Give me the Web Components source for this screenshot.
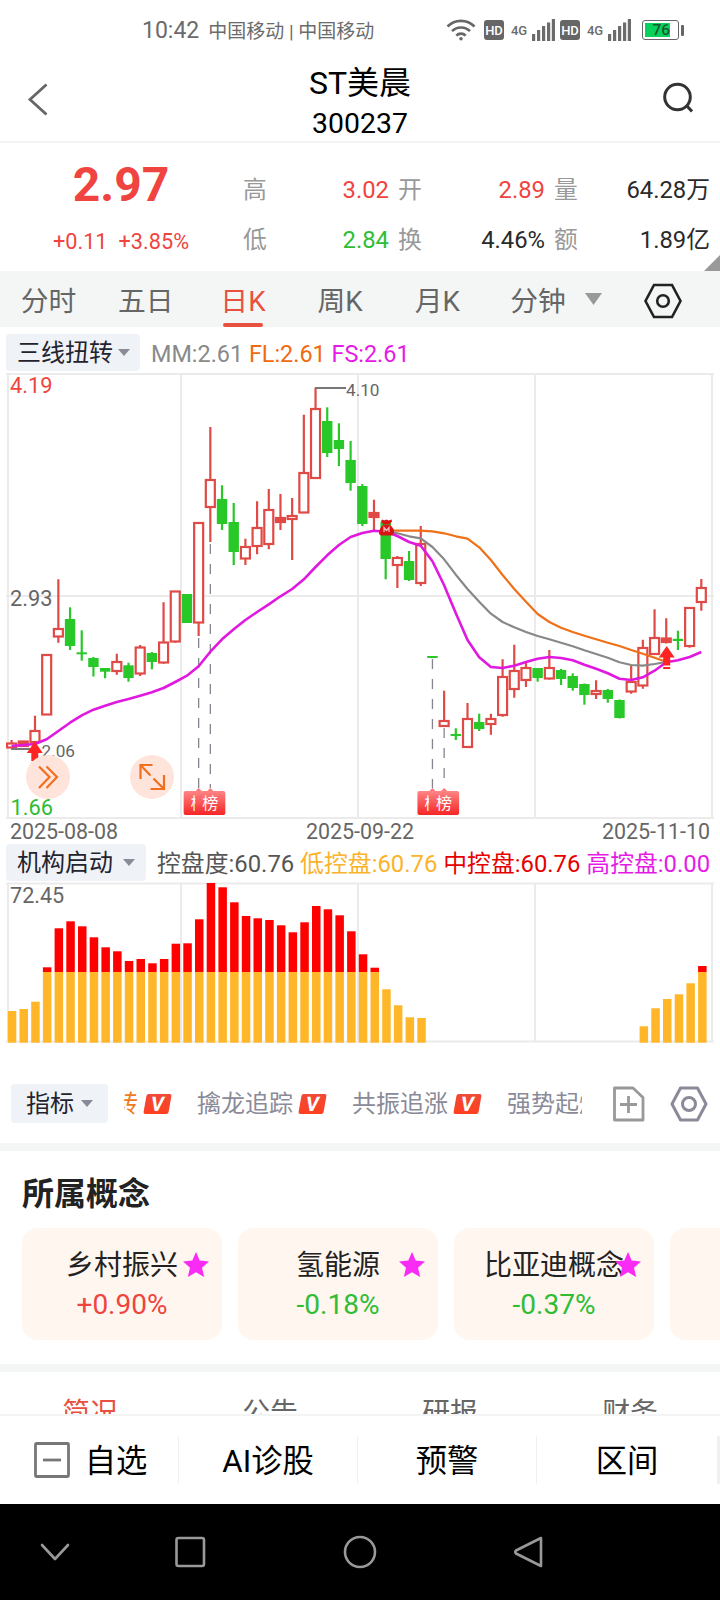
<!DOCTYPE html>
<html lang="zh-CN">
<head>
  <meta charset="UTF-8">
  <meta name="viewport" content="width=device-width,initial-scale=1,minimum-scale=1">
  <title>ST美晨 300237</title>
  <style type="text/css">
    body {
      --up: #ef4440;
      --down: #2fbd36;
      --panel: #f4f6f6;
      margin: 0;
      width: 720px;
      height: 1600px;
      overflow: hidden;
      background: #fff;
      color: #2a2a2a;
      font-family: Roboto, "Noto Sans CJK SC", sans-serif;
      display: flex;
      flex-direction: column;
    }

    .up { color: var(--up) }
    .down { color: var(--down) }
  </style>
</head>
<body>
  <status-bar>10:42<span slot="carrier">中国移动 | 中国移动</span></status-bar>
  <stock-header code="300237">ST美晨</stock-header>

  <quote-panel>
    <span slot="price">2.97</span>
    <span slot="change">+0.11</span>
    <span slot="change">+3.85%</span>
    <stat-cell label="高" class="up">3.02</stat-cell>
    <stat-cell label="开" class="up">2.89</stat-cell>
    <stat-cell label="量">64.28万</stat-cell>
    <stat-cell label="低" class="down">2.84</stat-cell>
    <stat-cell label="换">4.46%</stat-cell>
    <stat-cell label="额">1.89亿</stat-cell>
  </quote-panel>

  <period-bar>
    <period-tab>分时</period-tab>
    <period-tab>五日</period-tab>
    <period-tab active>日K</period-tab>
    <period-tab>周K</period-tab>
    <period-tab>月K</period-tab>
    <period-tab wide>分钟</period-tab>
  </period-bar>

  <indicator-row style="height: 45px; --top: 7px; --size: 23.4px; --gap: 11px">
    <drop-chip slot="chip" style="width: 134px; --pad: 11px; --gap: 5px">三线扭转</drop-chip>
    <span style="color: #8a8a8a">MM:2.61</span>
    <span style="color: #f06a10">FL:2.61</span>
    <span style="color: #e61ae6">FS:2.61</span>
  </indicator-row>
  <kline-chart>
    <span slot="date">2025-08-08</span>
    <span slot="date">2025-09-22</span>
    <span slot="date">2025-11-10</span>
  </kline-chart>

  <indicator-row style="height: 38px; --top: 0px; --size: 23.85px; --gap: 11px">
    <drop-chip slot="chip" style="width: 140px; --pad: 11px; --gap: 10px">机构启动</drop-chip>
    <span style="color: #555">控盘度:60.76</span>
    <span style="color: #fbb32b">低控盘:60.76</span>
    <span style="color: #e60000">中控盘:60.76</span>
    <span style="color: #e61ae6">高控盘:0.00</span>
  </indicator-row>
  <control-chart></control-chart>

  <tool-strip>
    <drop-chip slot="chip" style="width: 97px; height: 39px; --pad: 15px; --gap: 7px">指标</drop-chip>
    <vip-item style="color: #f07a20">三线扭转</vip-item>
    <vip-item>擒龙追踪</vip-item>
    <vip-item>共振追涨</vip-item>
    <vip-item>强势起爆</vip-item>
  </tool-strip>

  <concept-section heading="所属概念">
    <concept-card>乡村振兴<span slot="rate" class="up">+0.90%</span></concept-card>
    <concept-card>氢能源<span slot="rate" class="down">-0.18%</span></concept-card>
    <concept-card>比亚迪概念<span slot="rate" class="down">-0.37%</span></concept-card>
    <concept-card blank></concept-card>
  </concept-section>

  <info-tabs>
    <span style="color: #e8503f">简况</span>
    <span>公告</span>
    <span>研报</span>
    <span>财务</span>
  </info-tabs>

  <action-bar>
    <action-item icon>自选</action-item>
    <action-item>AI诊股</action-item>
    <action-item>预警</action-item>
    <action-item>区间</action-item>
  </action-bar>
  <system-nav></system-nav>

  <script type="text/javascript">

    // registers an element whose shadow root is a static template
    function define(name, html) {
      const template = document.createElement("template")
      template.innerHTML = html

      customElements.define(name, class extends HTMLElement {
        constructor() {
          super()
          const root = this.attachShadow({ mode: "open" })
          root.appendChild(template.content.cloneNode(true))
          root.querySelectorAll("[data-attr]").forEach(node => {
            node.textContent = this.getAttribute(node.dataset.attr)
          })
        }
      })
    }

    const signal = `
      <svg width="23" height="22" viewBox="0 0 23 22" fill="#6b6b6b">
        <path d="M0 15h3.200v7H0zM5 11h3.200v11H5zM10 7h3.200v15h-3.200zM15 3.500h3.200v18.500h-3.200zM19.800 0h3.200v22h-3.200z"/>
      </svg>`

    define("status-bar", `
      <style>
        :host {
          display: flex;
          align-items: center;
          height: 61px;
          padding: 0 36px 0 142px;
          box-sizing: border-box;
          color: #6b6b6b;
          font-size: 23px;
        }
        .carrier { font-size: 19px; margin-left: 9px; flex: 1; padding-bottom: 2px }
        .icons { display: flex; align-items: center; padding-bottom: 1px }
        .hd {
          width: 20px; height: 20px; line-height: 21px;
          border-radius: 3px;
          background: #666; color: #fff;
          font-size: 13px; font-weight: 500; text-align: center;
        }
        .net { font-size: 13px; font-weight: 500; width: 28px; text-align: center; padding-left: 1px; margin-right: -1px }
        .battery {
          width: 37px; height: 20px; box-sizing: border-box;
          border: 1.500px solid #666; border-radius: 3px;
          padding: 2px; margin-left: 11px;
        }
        .fill {
          width: 25px; height: 100%; background: #08d15c;
          color: #175b30; font-size: 15.500px; font-weight: 500; line-height: 15px;
          text-indent: 7.500px; white-space: nowrap;
        }
        .nub { width: 3px; height: 11px; background: #666; margin-left: 2px; border-radius: 1px }
      </style>
      <slot></slot>
      <span class="carrier"><slot name="carrier"></slot></span>
      <div class="icons">
        <svg width="30" height="22" viewBox="0 0 30 22" fill="none" stroke="#666" stroke-width="2.600" style="margin-right: 8px">
          <path d="M1.500 7.500a19 19 0 0 1 27 0M6 12.200a12.700 12.700 0 0 1 18 0M10.300 16.600a6.700 6.700 0 0 1 9.400 0"/>
          <circle cx="15" cy="19.800" r="1.800" fill="#666" stroke="none"/>
        </svg>
        <span class="hd">HD</span><span class="net">4G</span>${signal}
        <span class="hd" style="margin-left: 5px">HD</span><span class="net">4G</span>${signal}
        <div class="battery"><div class="fill">76</div></div><div class="nub"></div>
      </div>
    `)

    define("stock-header", `
      <style>
        :host {
          display: flex;
          justify-content: space-between;
          height: 82px;
          box-sizing: border-box;
          border-bottom: 2px solid #f3f4f4;
          color: #000;
          padding: 0 27px;
        }
        .title { padding-top: 2px; text-align: center; font-size: 32px; line-height: 40px }
        .code { font-size: 28.4px; line-height: 42px }
      </style>
      <svg width="32" height="80" fill="none" stroke="#666" stroke-width="2.800"><path d="M19.500 23.500L3 38.500l16.500 15"/></svg>
      <div class="title"><slot></slot><div class="code" data-attr="code"></div></div>
      <svg width="32" height="80" fill="none" stroke="#333" stroke-width="3"><circle cx="16.500" cy="36" r="12.800"/><path d="M25.500 44.500l5.500 6"/></svg>
    `)

    define("quote-panel", `
      <style>
        :host { display: flex; height: 128px; position: relative }
        .main { width: 242px; text-align: center; padding-top: 11px; color: var(--up); box-sizing: border-box }
        .price { font-size: 48px; font-weight: 700; line-height: 61px }
        .change { font-size: 21.700px; line-height: 53px; display: flex; justify-content: center; gap: 11px }
        .grid { display: grid; grid-template-columns: 146px 147px 156px; column-gap: 9px; padding: 22px 0 0 1px; height: 100px }
        .corner { position: absolute; right: 0; bottom: 0 }
      </style>
      <div class="main">
        <div class="price"><slot name="price"></slot></div>
        <div class="change"><slot name="change"></slot></div>
      </div>
      <div class="grid"><slot></slot></div>
      <svg class="corner" width="16" height="16" fill="#999"><path d="M16 0v16H0z"/></svg>
    `)

    define("stat-cell", `
      <style>
        :host { display: flex; justify-content: space-between; font-size: 23.800px; line-height: 50px }
        .label { color: #999 }
      </style>
      <span class="label" data-attr="label"></span><span><slot></slot></span>
    `)

    define("period-bar", `
      <style>
        :host { display: flex; align-items: center; height: 56px; background: var(--panel) }
        .arrow { margin-left: -5px; margin-right: 41px }
      </style>
      <slot></slot>
      <svg class="arrow" width="17" height="12" fill="#999"><path d="M0 0h17L8.500 12z"/></svg>
      <svg width="40" height="36" viewBox="0 0 40 36" fill="none" stroke="#222" stroke-width="2.600" style="margin-top: 4px">
        <path d="M11 2h18l8.500 16L29 34H11L2.500 18z"/><circle cx="20" cy="18" r="5.800"/>
      </svg>
    `)

    define("period-tab", `
      <style>
        :host {
          width: 97.200px; height: 56px; box-sizing: border-box;
          padding-top: 9px;
          display: flex; flex-direction: column; align-items: center; justify-content: space-between;
          font-size: 27.800px; line-height: 43px; color: #666;
        }
        :host([active]) { color: #e8503f }
        :host([wide]) { width: 104px }
        i { width: 40px; height: 4px; border-radius: 2px }
        :host([active]) i { background: #e8503f }
      </style>
      <span><slot></slot></span><i></i>
    `)

    define("drop-chip", `
      <style>
        :host {
          display: flex; align-items: center;
          height: 37px; box-sizing: border-box;
          padding-left: var(--pad); gap: var(--gap);
          background: #eff2f6; border-radius: 4px;
          color: #23232f; font-size: 24px;
        }
        span { white-space: nowrap; line-height: 36px; padding-top: 1px }
      </style>
      <span><slot></slot></span>
      <svg width="12" height="7" fill="#8a8a98"><path d="M0 0h12L6 7z"/></svg>
    `)

    define("indicator-row", `
      <style>
        :host {
          display: flex; box-sizing: border-box;
          padding: var(--top) 0 0 6px; gap: var(--gap);
          white-space: nowrap;
        }
        .values { font-size: var(--size); line-height: 40px; display: flex; gap: .247em }
      </style>
      <slot name="chip"></slot>
      <div class="values"><slot></slot></div>
    `)

    const RED = "#e04a46"
    const GREEN = "#28c828"
    const GRID = "#ebebeb"

    // [colour, high, body top, body bottom, low], "f" is a filled red body
    const CANDLES = [
      ["r", 740, 743.5, 747.5, 748], ["f", 741, 741.5, 746, 746], ["r", 715.7, 731, 742, 742],
      ["r", 655, 655, 714.5, 714.5], ["r", 579.3, 629, 636.5, 642.7], ["g", 607.3, 619, 646, 650],
      ["g", 630.3, 652.3, 654.3, 660.7], ["g", 657, 658, 667, 676.5], ["g", 668, 668, 671.7, 678.3],
      ["r", 653.7, 662, 671, 674.7], ["g", 662.7, 665.3, 678, 681.7], ["r", 645, 647.5, 673.5, 676],
      ["g", 652, 653, 662, 669.3], ["r", 602.3, 642.5, 662.5, 663.7], ["r", 591.5, 591.5, 641.5, 642.7],
      ["g", 594, 594, 623, 623], ["r", 523, 523, 622.5, 636], ["r", 427, 480, 507, 542],
      ["g", 485.3, 499, 524, 530], ["g", 503, 522, 552, 565], ["r", 538.7, 547, 558.5, 565],
      ["r", 501.3, 528, 546, 554.3], ["r", 489, 510, 544, 549.3], ["f", 494, 518, 522, 530],
      ["r", 498, 516, 519, 560], ["r", 414.7, 473, 512.5, 512.5], ["r", 387.7, 409, 478, 478],
      ["g", 407.3, 421, 453, 457], ["g", 423.3, 440, 449, 466], ["g", 441, 460, 483, 490.7],
      ["g", 484, 486, 524, 526], ["f", 499.7, 513, 517, 530], ["g", 520, 522, 559, 579.3],
      ["r", 556, 558, 565, 588], ["g", 551, 561, 580, 581], ["r", 526, 544, 583, 586],
      ["g", 656, 656, 658, 658], ["r", 690.7, 721, 726, 726], ["g", 728.3, 734, 736, 740],
      ["r", 703, 719, 747, 747], ["g", 713.7, 722, 729, 731], ["r", 713.7, 719, 724, 734.7],
      ["r", 659.3, 677, 715, 716.7], ["r", 644.7, 671, 689, 697.7], ["r", 661.7, 668, 680, 687],
      ["g", 668, 668, 678, 681.7], ["r", 650, 668, 678.5, 679.5], ["g", 669, 670, 679, 685],
      ["g", 673.3, 676, 688, 690.7], ["g", 683.5, 684, 695, 704.7], ["r", 680.3, 691, 694, 699],
      ["g", 689, 690, 699, 702.7], ["g", 699.5, 700, 718, 718.5], ["r", 665.7, 682, 691.5, 693.7],
      ["r", 639.7, 648, 685.5, 688.7], ["r", 609.3, 638, 654, 654], ["f", 618.3, 638.5, 642, 643.5],
      ["g", 630.7, 638.8, 641, 650], ["r", 608, 608, 646, 647.7], ["r", 579, 588, 602, 610.7]
    ]

    const FS = [746, 745, 744, 739.3, 731, 722.7, 715.3, 709.7, 705.7, 702, 699, 695.7, 692.3, 688, 682,
      675.7, 666.3, 651.7, 639.3, 629.3, 620, 612, 604.3, 596.3, 589, 579.3, 567, 555.3, 545, 537, 533,
      530.7, 531.7, 536, 542, 545.7, 561.3, 585.3, 613.3, 640, 657.3, 667, 668, 665.7, 662, 658.7, 657,
      658, 660.3, 664.7, 668.7, 673.3, 678.7, 680, 677.3, 670.7, 662.3, 660.3, 657, 652]
    const MM = [531, 533.3, 536.3, 538.3, 547, 559.3, 574.7, 589, 601.7, 613.7, 622, 627.3, 632, 636,
      639.3, 642.7, 646.3, 650.3, 654, 657.7, 662.3, 665, 665.7, 664, 662]
    const FL = [530.7, 530.7, 530.7, 530.7, 531.3, 533.3, 536.3, 538.7, 547.3, 560, 575, 589, 601.7, 614,
      622, 627.7, 632, 635.7, 639.3, 642.7, 646, 650, 653.7, 657.7, 661.7]

    const px = i => 11.6 + i * 11.69

    function candle([kind, high, top, bottom, low], i) {
      const x = px(i)
      if (kind == "g") {
        return `<path d="M${x} ${high}V${low}" stroke="${GREEN}" stroke-width="2.2"/>
          <rect x="${x - 5.2}" y="${top}" width="10.4" height="${bottom - top}" fill="${GREEN}"/>`
      }
      const fill = kind == "f" ? RED : "#fff"
      return `<path d="M${x} ${high}V${top}M${x} ${bottom}V${low}" stroke="${RED}" stroke-width="2.2"/>
        <rect x="${x - 4.5}" y="${top}" width="9" height="${bottom - top}" fill="${fill}" stroke="${RED}" stroke-width="2.2"/>`
    }

    function line(values, start, color, width) {
      const points = values.map((y, i) => `${px(start + i)},${y}`).join(" ")
      return `<polyline points="${points}" fill="none" stroke="${color}" stroke-width="${width}" stroke-linejoin="round"/>`
    }

    function frame(top, bottom) {
      const columns = [8, 181, 358, 535, 712].map(x => `M${x} ${top}V${bottom}`).join("")
      return `<path d="${columns}M6 ${top}H714M6 ${bottom}H714" stroke="${GRID}" stroke-width="2"/>`
    }

    function tag(x) {
      return `<path d="M${x - 3.500} 791.500l3.500-3.500 3.500 3.500z" fill="#f77"/>
        <rect x="${x - 15}" y="791" width="30" height="24" rx="2" fill="url(#tag)"/>
        <text x="${x}" y="809" font-size="16" text-anchor="middle" fill="#fff">榜</text>`
    }

    function arrow(x, y) {
      return `<path d="M${x} ${y}l8 11.500h-4.500v8h-7v-8H${x - 8}z" fill="#ff2424"/>
        <path d="M${x - 3.5} ${y + 22}h7" stroke="#ff2424" stroke-width="2"/>`
    }

    function dash(x, top) {
      return `<path d="M${x} ${top}V788" stroke="#85858f" stroke-width="1.3" stroke-dasharray="10"/>`
    }

    define("kline-chart", `
      <style>
        :host { display: block; color: #666; font-size: 21.400px }
        svg { display: block }
        .dates { display: flex; justify-content: space-between; padding: 0 10px; height: 24px; line-height: 23px }
      </style>
      <svg width="720" height="448" viewBox="0 372 720 448">
        <defs>
          <linearGradient id="tag" x1="0" y1="0" x2="0" y2="1">
            <stop offset="0" stop-color="#ff8585"/><stop offset="1" stop-color="#f52525"/>
          </linearGradient>
        </defs>
        ${frame(374, 818)}
        <path d="M6 596H714" stroke="${GRID}" stroke-width="2"/>
        ${dash(px(16), 638)}${dash(px(17), 544)}${dash(px(36), 659)}${dash(px(37), 728)}
        ${CANDLES.map(candle).join("")}
        ${line(FL, 32, "#f07018", 2.2)}${line(MM, 32, "#888", 2.2)}${line(FS, 0, "#e018e0", 2.6)}
        <path d="M315 388H346M11 749H30" stroke="#777" stroke-width="1.800"/>
        <g fill="#666">
          <text x="346" y="396" font-size="17.200">4.10</text>
          <text x="41.500" y="757" font-size="17.200">2.06</text>
          <text x="10" y="393" font-size="21.800" fill="#ef4440">4.19</text>
          <text x="10" y="606" font-size="21.800">2.93</text>
          <text x="10.500" y="815" font-size="21.800" fill="#2fbd36">1.66</text>
        </g>
        <g fill="#d91414">
          <path d="M382 519.500l2.500 1 2-1 2 1 3-1 .5 2-2.500 3h-6l-2.500-3z"/>
          <path d="M383 525h7c3 2 4.500 5 4 8-.5 2-2 2.500-4 2.500h-7c-2.500 0-4-.5-4-2.500 0-3 1.500-6 4-8z"/>
          <path d="M384 532v-4.500l2.500 3 2.500-3v4.500" fill="none" stroke="#f6b8c0" stroke-width="1.200"/>
        </g>
        ${arrow(34.8, 741.5)}${arrow(666.7, 646)}
        <g fill="none" stroke="#f07020" stroke-width="2.200">
          <circle cx="48" cy="777" r="22" fill="#ffe4dc" stroke="none"/>
          <path d="M39 766.500l10.500 10.500L39 788M46.500 766.500L57 777l-10.500 11"/>
          <circle cx="152" cy="777" r="22" fill="#ffe4dc" stroke="none"/>
          <path d="M140.500 779v-14h12M141 765.500l9.500 10M164 775v14h-13.500M163.500 788.500l-10-10"/>
        </g>
        ${tag(px(16))}${tag(px(17))}${tag(px(36))}${tag(px(37))}
      </svg>
      <div class="dates"><slot name="date"></slot></div>
    `)

    // bar index -> top edge; the part above LEVEL is drawn red
    const LEVEL = 972
    const BASE = 1042.7
    const BARS = [1011, 1009, 1001.7, 967.3, 928.3, 921.3, 926.3, 937.3, 947.3, 951.3, 961, 959, 963.3, 959,
      943.7, 943.3, 919.3, 883, 887.3, 902.3, 916, 918.3, 920, 925.3, 932.3, 922.3, 906, 909.3, 915.3,
      931.3, 954.3, 967.7, 989.3, 1005.3, 1017.3, 1018].concat(
        Array(18).fill(null), [1026.3, 1008.3, 999, 994.3, 983.3, 966])

    function bar(top, i) {
      if (top === null) return ""
      const x = 7.8 + i * 11.7
      const mid = Math.max(top, LEVEL)
      return `<rect x="${x}" y="${mid}" width="8.500" height="${BASE - mid}" fill="#ffb628"/>
        <rect x="${x}" y="${top}" width="8.500" height="${mid - top}" fill="#fe0000"/>`
    }

    define("control-chart", `
      <style>
        :host, svg { display: block }
      </style>
      <svg width="720" height="162" viewBox="0 882 720 162">
        ${frame(883.5, 1041.5)}
        ${BARS.map(bar).join("")}
        <text x="10" y="902.500" font-size="21.600" fill="#666">72.45</text>
      </svg>
    `)

    define("tool-strip", `
      <style>
        :host {
          display: flex; align-items: center;
          height: 99px; box-sizing: border-box;
          padding: 20px 12px 0 11px;
        }
        .items { width: 458px; margin: 0 31px 0 16px; overflow: hidden }
        .track { display: flex; gap: 26px; margin-left: -82px }
        svg { flex: none }
      </style>
      <slot name="chip"></slot>
      <div class="items"><div class="track"><slot></slot></div></div>
      <svg width="32" height="36" viewBox="0 0 32 36" fill="none" stroke="#999" stroke-width="2.800" stroke-linejoin="round">
        <path d="M1.500 2h18.500l10 9.500V34H1.500zM15.500 10v17M7 18.500h17"/>
      </svg>
      <svg width="38" height="36" viewBox="0 0 38 36" fill="none" stroke="#8a8a98" stroke-width="3" stroke-linejoin="round" style="margin-left: 25px">
        <path d="M10.500 2h17L36 18l-8.500 16h-17L2 18z"/><circle cx="19" cy="18" r="6.500"/>
      </svg>
    `)

    define("vip-item", `
      <style>
        :host {
          display: flex; align-items: center; gap: 5px; flex: none;
          font-size: 24px; line-height: 38px; color: #8a8a98; white-space: nowrap;
        }
        b {
          width: 25px; height: 20px; line-height: 21px; margin: 0 1px 0 2px;
          border-radius: 2px; transform: skewX(-10deg);
          background: linear-gradient(#f04a38, #ff4020);
          color: #fff; font-size: 20px; font-weight: 700; text-align: center;
        }
      </style>
      <span><slot></slot></span><b>V</b>
    `)

    define("concept-section", `
      <style>
        :host {
          display: block; height: 229px; box-sizing: border-box;
          border: solid var(--panel); border-width: 8px 0;
          padding: 23px 0 0 22px; overflow: hidden;
        }
        h2 { margin: 0 0 14px; font-size: 32px; font-weight: 700; line-height: 40px; color: #222 }
        .cards { display: flex; gap: 16px }
      </style>
      <h2 data-attr="heading"></h2>
      <div class="cards"><slot></slot></div>
    `)

    define("concept-card", `
      <style>
        :host {
          flex: none; width: 200px; height: 112px; box-sizing: border-box;
          border-radius: 16px; background: #fff6f0;
          text-align: center; font-size: 28px; padding-top: 19px;
          position: relative; color: #222; line-height: 38.500px;
        }
        :host([blank]) svg { display: none }
        svg { position: absolute; left: 161px; top: 24px }
      </style>
      <div><slot></slot></div>
      <slot name="rate"></slot>
      <svg width="26" height="25" viewBox="0 0 26 25" fill="#f92cf5">
        <path d="M13 0l3.700 8.500 9.300 1-7 6.200 2.200 9.300-8.200-4.800L4.800 25 7 15.700 0 9.500l9.300-1z"/>
      </svg>
    `)

    define("info-tabs", `
      <style>
        :host {
          display: grid; grid-template-columns: repeat(4, 1fr);
          height: 42px; overflow: hidden;
          text-align: center; font-size: 27.800px; line-height: 81px; color: #666;
        }
      </style>
      <slot></slot>
    `)

    define("action-bar", `
      <style>
        :host {
          display: flex; align-items: center;
          height: 90px; box-sizing: border-box;
          border-top: 2px solid #f3f4f4; background: #fff;
        }
      </style>
      <slot></slot>
    `)

    define("action-item", `
      <style>
        :host {
          width: 179px; height: 48px; box-sizing: border-box;
          border-right: 1px solid #f0f0f0;
          display: flex; align-items: center; justify-content: center; gap: 15px;
          font-size: 31.300px; color: #000;
        }
        :host(:last-of-type) { border-right-width: 3px; flex: 1 }
        svg { display: none }
        :host([icon]) { padding-left: 3px }
        :host([icon]) svg { display: block }
        span { padding-bottom: 4px }
      </style>
      <svg width="36" height="36" fill="none" stroke="#777" stroke-width="2.800"><rect x="1.500" y="1.500" width="33" height="33" rx="1"/><path d="M9 18h18"/></svg>
      <span><slot></slot></span>
    `)

    define("system-nav", `
      <style>
        :host { display: block; height: 96px; background: #000 }
      </style>
      <svg width="720" height="96" fill="none" stroke="#999" stroke-width="2.600" stroke-linejoin="round" stroke-linecap="round">
        <path d="M42 41l13 14 13-14"/>
        <rect x="176.500" y="34" width="27.500" height="28" rx="2"/>
        <circle cx="360" cy="48" r="15"/>
        <path d="M541 34v28L516 49.500q-1.500-1.500 0-3z"/>
      </svg>
    `)
  </script>
</body>
</html>
